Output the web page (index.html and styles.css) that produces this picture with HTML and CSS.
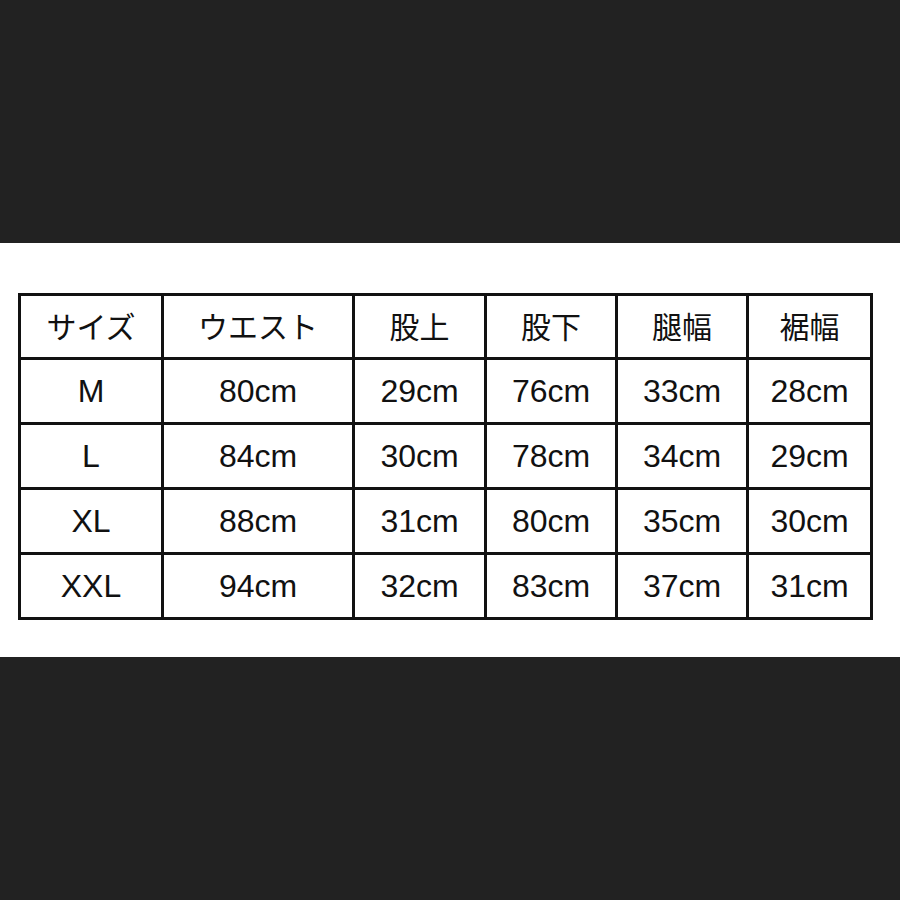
FILE: index.html
```html
<!DOCTYPE html>
<html lang="ja">
<head>
<meta charset="utf-8">
<link rel="stylesheet" href="styles.css">
</head>
<body>
<div class="band-top"></div>
<div class="sheet">
  <table class="size-table">
    <colgroup>
      <col class="c1"><col class="c2"><col class="c3"><col class="c4"><col class="c5"><col class="c6">
    </colgroup>
    <tr class="head"><td>サイズ</td><td>ウエスト</td><td>股上</td><td>股下</td><td>腿幅</td><td>裾幅</td></tr>
    <tr><td>M</td><td>80cm</td><td>29cm</td><td>76cm</td><td>33cm</td><td>28cm</td></tr>
    <tr><td>L</td><td>84cm</td><td>30cm</td><td>78cm</td><td>34cm</td><td>29cm</td></tr>
    <tr><td>XL</td><td>88cm</td><td>31cm</td><td>80cm</td><td>35cm</td><td>30cm</td></tr>
    <tr><td>XXL</td><td>94cm</td><td>32cm</td><td>83cm</td><td>37cm</td><td>31cm</td></tr>
  </table>
</div>
<div class="band-bottom"></div>
</body>
</html>
```
FILE: styles.css
```css
html, body {
  margin: 0;
  padding: 0;
  background: #222222;
}
.band-top {
  height: 243px;
  background: #222222;
}
.sheet {
  height: 414px;
  background: #ffffff;
  padding-top: 50px;
  box-sizing: border-box;
}
.size-table {
  margin-left: 18px;
  width: 852px;
  table-layout: fixed;
  border-collapse: collapse;
  font-family: "Liberation Sans", "Noto Sans CJK JP", sans-serif;
  font-size: 32px;
  color: #111111;
}
.c1 { width: 143px; }
.c2 { width: 191px; }
.c3 { width: 132px; }
.c4 { width: 131px; }
.c5 { width: 131px; }
.c6 { width: 124px; }
.size-table td {
  border: 3px solid #111111;
  height: 62px;
  padding: 0;
  text-align: center;
  vertical-align: middle;
}
.size-table .head td {
  font-family: "Noto Sans CJK JP", sans-serif;
  font-size: 30px;
  height: 57px;
  padding-bottom: 4px;
}
.band-bottom {
  height: 243px;
  background: #222222;
}
```
